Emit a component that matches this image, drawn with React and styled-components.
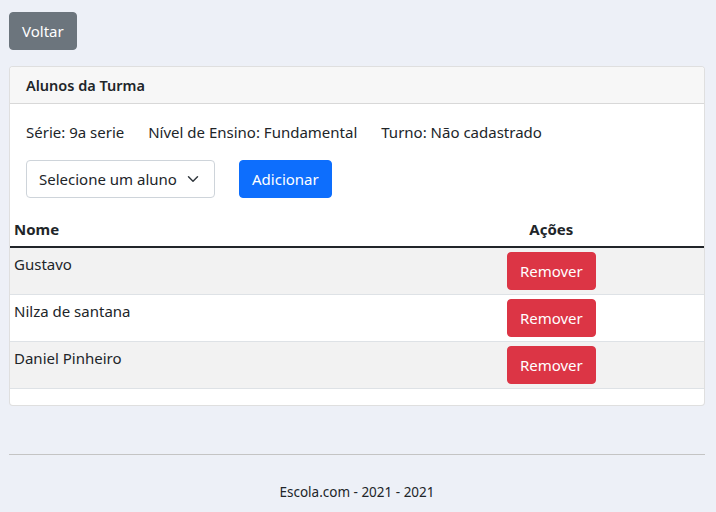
import React from "react";
import styled, { createGlobalStyle } from "styled-components";

const Global = createGlobalStyle`
  html, body { margin: 0; padding: 0; }
  body {
    background: #edf0f7;
    font-family: "Noto Sans", "Open Sans", sans-serif;
    color: #212529;
    font-size: 15px;
  }
  * { box-sizing: border-box; }
`;

const Page = styled.div`
  padding: 12px 11px 0 9px;
`;

const Button = styled.button`
  font-family: inherit;
  font-size: 15px;
  line-height: 24px;
  height: 38px;
  padding: 6px 12px;
  border: 1px solid ${(p) => p.$bg};
  border-radius: 4px;
  background: ${(p) => p.$bg};
  color: #fff;
  cursor: pointer;
`;

const Card = styled.section`
  margin-top: 16px;
  background: #fff;
  border: 1px solid rgba(0, 0, 0, 0.125);
  border-radius: 4px;
  overflow: hidden;
  padding-bottom: 16px;
`;

const CardHeader = styled.header`
  height: 37px;
  padding: 0 16px;
  display: flex;
  align-items: center;
  background: #f7f7f7;
  border-bottom: 1px solid rgba(0, 0, 0, 0.125);
  font-weight: 600;
  font-size: 14.5px;
`;

const CardBody = styled.div`
  padding: 16px 16px 16px;
`;

const InfoRow = styled.div`
  display: flex;
  gap: 24px;
  height: 24px;
  align-items: center;
`;

const FormRow = styled.div`
  display: flex;
  gap: 24px;
  margin-top: 16px;
`;

const Select = styled.div`
  width: 189px;
  height: 38px;
  border: 1px solid #ced4da;
  border-radius: 4px;
  display: flex;
  align-items: center;
  justify-content: space-between;
  padding: 0 15px 0 12px;
  font-size: 15px;
  color: #212529;
`;

const Table = styled.table`
  width: 100%;
  border-collapse: collapse;
`;

const Th = styled.th`
  text-align: ${(p) => p.$align || "left"};
  padding: 4px 4px 6px;
  font-size: 15px;
  font-weight: 700;
  line-height: 22px;
  border-bottom: 2px solid #212529;
  width: ${(p) => p.$w || "auto"};
`;

const Tr = styled.tr`
  background: ${(p) => (p.$striped ? "#f2f2f2" : "#fff")};
  border-bottom: 1px solid #dee2e6;
`;

const Td = styled.td`
  vertical-align: top;
  padding: 4px;
  line-height: 24px;
  text-align: ${(p) => p.$align || "left"};
`;

const Footer = styled.footer`
  margin-top: 48px;
  border-top: 1px solid #c4c4c4;
  padding-top: 28px;
  text-align: center;
  font-size: 13.5px;
  color: #212529;
`;

const Chevron = () => (
  <svg width="12" height="12" viewBox="0 0 16 16" fill="none">
    <path d="M2 5l6 6 6-6" stroke="#343a40" strokeWidth="2" strokeLinecap="round" strokeLinejoin="round" />
  </svg>
);

const alunos = ["Gustavo", "Nilza de santana", "Daniel Pinheiro"];

export default function App() {
  return (
    <>
      <Global />
      <Page>
        <Button $bg="#6c757d">Voltar</Button>
        <Card>
          <CardHeader>Alunos da Turma</CardHeader>
          <CardBody>
            <InfoRow>
              <span>Série: 9a serie</span>
              <span>Nível de Ensino: Fundamental</span>
              <span>Turno: Não cadastrado</span>
            </InfoRow>
            <FormRow>
              <Select>
                <span>Selecione um aluno</span>
                <Chevron />
              </Select>
              <Button $bg="#0d6efd">Adicionar</Button>
            </FormRow>
          </CardBody>
          <Table>
            <thead>
              <tr>
                <Th $w="56%">Nome</Th>
                <Th $align="center">Ações</Th>
              </tr>
            </thead>
            <tbody>
              {alunos.map((a, i) => (
                <Tr key={a} $striped={i % 2 === 0}>
                  <Td>{a}</Td>
                  <Td $align="center">
                    <Button $bg="#dc3545">Remover</Button>
                  </Td>
                </Tr>
              ))}
            </tbody>
          </Table>
        </Card>
        <Footer>Escola.com - 2021 - 2021</Footer>
      </Page>
    </>
  );
}
